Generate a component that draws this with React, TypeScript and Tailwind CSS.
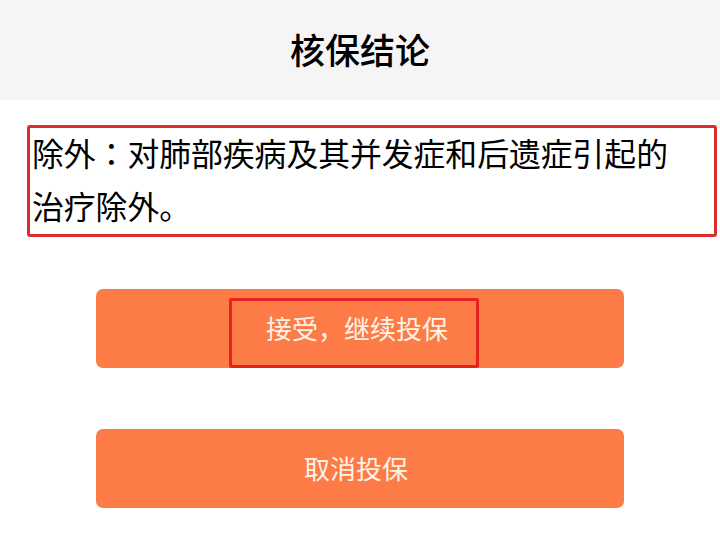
export default function App() {
  return (
    <div
      className="w-[720px] h-[551px] bg-white overflow-hidden"
      style={{ fontFamily: '"Noto Sans CJK SC", "Noto Sans", sans-serif' }}
    >
      <div className="h-[100px] bg-[#f5f5f5] flex items-center justify-center">
        <h1 className="text-[35px] font-medium text-black leading-none -mt-[4px]">核保结论</h1>
      </div>

      <div className="ml-[27px] mt-[25px] w-[690px] h-[112px] border-[3px] border-[#dd2e2a] rounded-[3px] px-[2px]">
        <p
          className="text-[31.8px] leading-[53px] text-black -mt-[2px]"
          style={{ fontFamily: '"Noto Sans CJK JP", "Noto Sans CJK SC", sans-serif' }}
        >
          除外：对肺部疾病及其并发症和后遗症引起的
          <br />
          治疗除外。
        </p>
      </div>

      <div className="flex flex-col items-center mt-[52px] gap-[61px]">
        <button className="relative w-[528px] h-[79px] rounded-[7px] bg-[#fd7b47] text-[#fff3e8] text-[26px] flex items-center justify-center">
          <span className="-mt-[2px] -ml-[6px]">接受，继续投保</span>
          <span className="absolute left-[133px] top-[9px] w-[250px] h-[70px] border-[3px] border-[#e8231d] rounded-[2px]" />
        </button>
        <button className="w-[528px] h-[79px] rounded-[7px] bg-[#fd7b47] text-[#fff3e8] text-[26px] flex items-center justify-center">
          <span className="-mt-[2px] -ml-[8px]">取消投保</span>
        </button>
      </div>
    </div>
  );
}
